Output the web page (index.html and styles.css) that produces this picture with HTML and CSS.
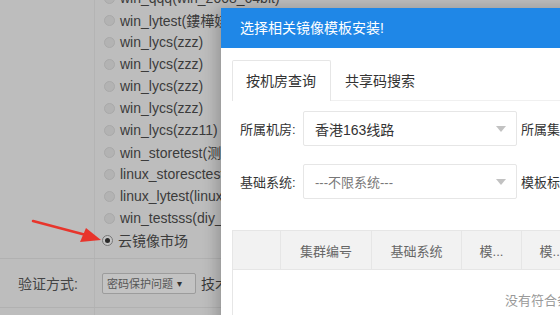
FILE: index.html
```html
<!DOCTYPE html>
<html lang="zh-CN">
<head>
  <meta charset="UTF-8" />
  <title>选择镜像模板</title>
  <link rel="stylesheet" href="styles.css">
</head>
<body>
  <div class="page">
    <div class="row row-images">
      <div class="cell-label"></div>
      <div class="cell-value">
        <ul class="radio-list">
          <li><span class="radio"></span>win_qqq(win_2008_64bit)</li>
          <li><span class="radio"></span>win_lytest(鏤樺姟)</li>
          <li><span class="radio"></span>win_lycs(zzz)</li>
          <li><span class="radio"></span>win_lycs(zzz)</li>
          <li><span class="radio"></span>win_lycs(zzz)</li>
          <li><span class="radio"></span>win_lycs(zzz)</li>
          <li><span class="radio"></span>win_lycs(zzz11)</li>
          <li><span class="radio"></span>win_storetest(测试)</li>
          <li><span class="radio"></span>linux_storesctest</li>
          <li><span class="radio"></span>linux_lytest(linux)</li>
          <li><span class="radio"></span>win_testsss(diy_)</li>
          <li class="checked"><span class="radio"></span>云镜像市场</li>
        </ul>
      </div>
    </div>
    <div class="row row-verify">
      <div class="cell-label">验证方式:</div>
      <div class="cell-value">
        <span class="mini-select">密码保护问题 <i>▾</i></span>
        <span class="after">技术支持</span>
      </div>
    </div>
    <div class="row row-last">
      <div class="cell-label"></div>
      <div class="cell-value"></div>
    </div>
  </div>

  <!-- annotation arrow -->
  <svg class="arrow" width="110" height="40" viewBox="0 0 110 40">
    <path d="M33 13 L86 27" stroke="#e8352c" stroke-width="2.5" stroke-linecap="round" fill="none"/>
    <path d="M101 32 L80 34 L86 20 Z" fill="#e8352c"/>
  </svg>

  <div class="modal">
    <div class="modal-head">选择相关镜像模板安装!</div>
    <div class="modal-body">
      <div class="tabs">
        <div class="tab active">按机房查询</div>
        <div class="tab">共享码搜索</div>
      </div>
      <div class="form-row">
        <label>所属机房:</label>
        <div class="select"><span>香港163线路</span><i class="caret"></i></div>
        <label>所属集群:</label>
      </div>
      <div class="form-row">
        <label>基础系统:</label>
        <div class="select placeholder"><span>---不限系统---</span><i class="caret"></i></div>
        <label>模板标签:</label>
      </div>
      <table class="grid">
        <thead>
          <tr>
            <th class="col-check"></th>
            <th class="col-id">集群编号</th>
            <th class="col-sys">基础系统</th>
            <th class="col-sm">模...</th>
            <th class="col-sm">模...</th>
            <th></th>
          </tr>
        </thead>
        <tbody>
          <tr><td colspan="6" class="empty">没有符合条件的记录</td></tr>
        </tbody>
      </table>
    </div>
  </div>
</body>
</html>
```

FILE: styles.css
```css
body {
  margin: 0;
  width: 560px;
  height: 315px;
  overflow: hidden;
  background: #bdbdbd;
  font-family: "Liberation Sans", "Noto Sans CJK SC", sans-serif;
  color: #3b3b3b;
  position: relative;
}

/* dimmed page behind the dialog */
.row {
  display: flex;
  border-bottom: 1px solid #b1b1b1;
}
.cell-label {
  width: 78px;
  padding-right: 16px;
  border-right: 1px solid #b4b4b4;
  text-align: right;
  font-size: 14px;
  flex-shrink: 0;
}
.cell-value {
  flex: 1;
}
.radio-list {
  list-style: none;
  margin: -13px 0 0 0;
  padding: 0 0 7px 9px;
}
.radio-list li {
  height: 22px;
  display: flex;
  align-items: center;
  gap: 5px;
  font-size: 14px;
  white-space: nowrap;
}
.radio {
  width: 9px;
  height: 9px;
  border: 1px solid #a9a9a9;
  border-radius: 50%;
  background: #b3b3b3;
  flex-shrink: 0;
  position: relative;
}
.checked .radio {
  background: #c4c4c4;
  border-color: #777;
}
.checked .radio::after {
  content: "";
  position: absolute;
  left: 2px;
  top: 2px;
  width: 5px;
  height: 5px;
  border-radius: 50%;
  background: #2a2a2a;
}
.checked {
  margin-left: -2px;
}

.row-verify {
  height: 48px;
  align-items: stretch;
}
.row-verify .cell-label {
  display: flex;
  align-items: center;
  justify-content: flex-end;
  font-size: 14px;
  color: #444;
}
.row-verify .cell-value {
  display: flex;
  align-items: center;
  padding-left: 7px;
  gap: 5px;
  white-space: nowrap;
  font-size: 14px;
}
.mini-select {
  width: 88px;
  height: 19px;
  border: 1px solid #9c9c9c;
  border-radius: 2px;
  background: #c3c3c3;
  font-size: 11px;
  color: #555;
  display: flex;
  align-items: center;
  padding-left: 4px;
  gap: 4px;
}
.mini-select i {
  font-style: normal;
  font-size: 10px;
  color: #333;
}
.row-last {
  height: 20px;
  border-bottom: none;
}

.arrow {
  position: absolute;
  left: 0;
  top: 208px;
}

/* dialog */
.modal {
  position: absolute;
  left: 221px;
  top: 8px;
  width: 685px;
  height: 400px;
  background: #fff;
  box-shadow: -4px 0 14px rgba(0, 0, 0, 0.22);
}
.modal-head {
  height: 40px;
  line-height: 40px;
  padding-left: 19px;
  background: #1f87e7;
  color: #fff;
  font-size: 14px;
}
.modal-body {
  padding: 12px 11px;
}
.tabs {
  display: flex;
  height: 40px;
  border-bottom: 1px solid #f0f0f0;
}
.tab {
  padding: 0 14px 0 13px;
  line-height: 40px;
  font-size: 14px;
  color: #333;
  border: 1px solid transparent;
  border-bottom: none;
}
.tab.active {
  border-color: #e6e6e6;
  border-radius: 2px 2px 0 0;
  background: #fff;
  margin-bottom: -1px;
  width: 70px;
}

.form-row {
  display: flex;
  align-items: center;
  margin-top: 10px;
  white-space: nowrap;
}
.form-row + .form-row {
  margin-top: 18px;
}
.form-row label {
  font-size: 13px;
  color: #333;
}
.form-row label:first-child {
  width: 63px;
  margin-left: 8px;
}
.select {
  height: 33px;
  border: 1px solid #e6e6e6;
  border-radius: 2px;
  display: flex;
  align-items: center;
  justify-content: space-between;
  padding: 0 10px 0 11px;
  width: 191px;
  margin-right: 4px;
  font-size: 14px;
  color: #333;
}
.select.placeholder {
  color: #777;
  font-size: 13px;
}
.caret {
  width: 0;
  height: 0;
  border-left: 5px solid transparent;
  border-right: 5px solid transparent;
  border-top: 6px solid #c2c2c2;
}

.grid {
  margin-top: 31px;
  width: 663px;
  border-collapse: collapse;
  font-size: 13px;
}
.grid th {
  height: 38px;
  background: #f2f2f2;
  border: 1px solid #e6e6e6;
  color: #666;
  font-weight: normal;
  padding: 0;
}
.grid .col-check { width: 47px; }
.grid .col-id { width: 90px; }
.grid .col-sys { width: 89px; }
.grid .col-sm { width: 59px; }
.grid td {
  border: 1px solid #e6e6e6;
  border-top: none;
}
.empty {
  height: 57px;
  text-align: center;
  color: #999;
}
```
